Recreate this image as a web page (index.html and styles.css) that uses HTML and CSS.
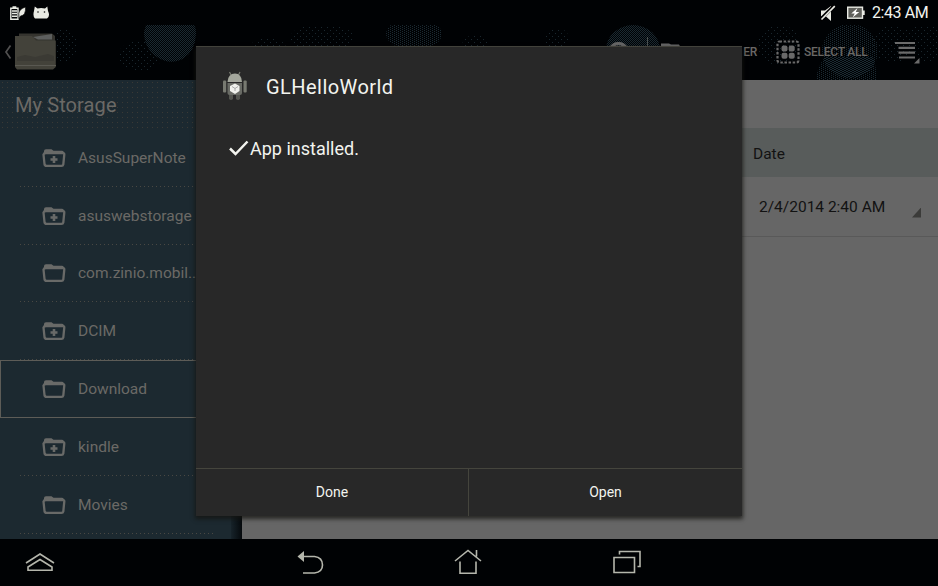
FILE: index.html
```html
<!DOCTYPE html>
<html lang="en">
<head>
<meta charset="utf-8">
<title>File Manager</title>
<link rel="stylesheet" href="styles.css">
</head>
<body>
<svg width="0" height="0" class="defs">
  <defs>
    <symbol id="folder" viewBox="0 0 24 20">
      <path d="M2.500 16L1.500 6.500Q2 5 4 5H20.500Q22.500 5 22.300 6.500L21.300 16.500Q21 17.800 19.500 17.800H4.500Q2.700 17.800 2.500 16Z" fill="none" stroke="currentColor" stroke-width="2.300"/>
      <path d="M2 6V3Q2 1.200 4 1.200H9.500L11.500 2.700H20Q22 2.700 22 6Z" fill="currentColor"/>
    </symbol>
    <symbol id="folder-plus" viewBox="0 0 24 20">
      <use href="#folder"/>
      <path d="M12 8V15M8.500 11.500H15.500" stroke="currentColor" stroke-width="2.600"/>
    </symbol>
  </defs>
</svg>
<div class="screen">
  <header class="status">
    <svg class="status-left" width="50" height="25" viewBox="0 0 50 25">
      <path d="M10.8 8.3H18V19.3H10.8ZM12.5 7H16.3" fill="none" stroke="#e9ebe4" stroke-width="1.4"/>
      <path d="M12 11H17M12 13.5H17M12 16.2H17" stroke="#e9ebe4" stroke-width="1.5"/>
      <path d="M19 16.5Q17.5 9.5 25.5 7Q26 15.5 20.5 16L19 18.5Z" fill="#e9ebe4" stroke="#000" stroke-width=".6"/>
      <path d="M35 18.500Q32.500 16 34 11L34.8 6.500L37.5 8.500Q41 7.6 45 8.500L47.300 6.500L48 11Q50.500 16 47 18.500Z" fill="#e9ebe4"/>
      <circle cx="38" cy="12" r=".8" fill="#111"/><circle cx="44.5" cy="12" r=".8" fill="#111"/>
    </svg>
    <div class="status-right">
      <svg width="16" height="18" viewBox="0 0 16 18">
        <path d="M1 6.500H5L11 2V17L6 12.5H1Z" fill="#e9ebe4"/>
        <path d="M0 16L14 2" stroke="#000" stroke-width="3.4"/>
        <path d="M1.5 15.5L14.8 2.2" stroke="#e9ebe4" stroke-width="1.7"/>
      </svg>
      <svg class="battery" width="18" height="14" viewBox="0 0 18 14">
        <rect x=".7" y="1.2" width="14.8" height="11" fill="#60615c" stroke="#e9ebe4" stroke-width="1.4"/>
        <path d="M16 4.5H17.7V9H16Z" fill="#e9ebe4"/>
        <path d="M10.5 2L4.3 7.4H7.7L5.7 11.5L12.3 6H8.8Z" fill="#fff"/>
      </svg>
      <span class="clock">2:43 AM</span>
    </div>
  </header>

  <div class="actionbar">
    <svg class="bokeh" width="938" height="55" viewBox="0 25 938 55">
      <defs>
        <pattern id="dense" width="2" height="2" patternUnits="userSpaceOnUse"><path d="M0 0h1v1H0zM1 1h1v1H1z" fill="#1b2a32"/></pattern>
        <pattern id="mid" width="4" height="2" patternUnits="userSpaceOnUse"><path d="M0 0h1v1H0zM2 1h1v1H2z" fill="#1b2a32"/></pattern>
        <pattern id="sparse" width="6" height="6" patternUnits="userSpaceOnUse"><path d="M0 0h1v1H0zM3 3h1v1H3z" fill="#1a272e"/></pattern>
      </defs>
      <path d="M146 25H193Q196 25 196 34Q195 51 184 58Q171 66 157 57Q144 48 144 32Z" fill="url(#dense)"/>
      <ellipse cx="140" cy="56" rx="22" ry="15" fill="url(#sparse)"/>
      <ellipse cx="64" cy="45" rx="14" ry="17" fill="url(#sparse)"/>
      <ellipse cx="268" cy="48" rx="18" ry="10" fill="url(#sparse)"/>
      <ellipse cx="322" cy="38" rx="32" ry="14" fill="url(#sparse)"/>
      <ellipse cx="414" cy="34" rx="28" ry="16" fill="url(#mid)"/>
      <ellipse cx="475" cy="46" rx="13" ry="11" fill="url(#sparse)"/>
      <ellipse cx="557" cy="39" rx="12" ry="11" fill="url(#sparse)"/>
      <ellipse cx="633" cy="50" rx="27" ry="25" fill="url(#dense)"/>
      <ellipse cx="779" cy="45" rx="21" ry="20" fill="url(#sparse)"/>
      <ellipse cx="850" cy="51" rx="28" ry="27" fill="url(#mid)"/>
      <path d="M824 57H872Q876 68 875 80H815Q816 67 824 57Z" fill="url(#mid)" transform="translate(1 0)"/>
      <ellipse cx="893" cy="44" rx="22" ry="18" fill="url(#sparse)"/>
      <ellipse cx="927" cy="37" rx="16" ry="26" fill="url(#sparse)"/>
      <path d="M610.500 48.500A9 9 0 0 1 626.500 48.500" fill="none" stroke="#666" stroke-width="3.400"/>
      <path d="M647.5 37V60" stroke="#4a5050"/>
      <path d="M661 48V43.500H669L671 44.500H679L681 48Z" fill="#666"/>
    </svg>
    <svg class="up" width="60" height="55" viewBox="0 25 60 55">
      <path d="M10.500 45.500L6 52L10.500 58.500" fill="none" stroke="#505050" stroke-width="1.700"/>
      <path d="M19 33.500H52L55 36V66H19Z" fill="#35342f"/>
      <path d="M15 36H32L36 40.500H55.800V67L53 69.500H17L15 67Z" fill="#43423a"/>
      <path d="M33 37L52 34V39.500H38Z" fill="#5d5f5e"/>
      <path d="M17 57L25 55L35 57L48 54L54 56V61H17Z" fill="#3b3a34"/>
      <path d="M15 65.500H56" stroke="#5a5952"/>
    </svg>
    <div class="actions">
      <span class="action-label">ER</span>
      <svg class="grid-icon" width="24" height="24" viewBox="0 0 24 24">
        <rect x="1.500" y="1.500" width="21" height="21" rx="2" fill="none" stroke="#696969" stroke-width="2.200" stroke-dasharray="2.500 1.600"/>
        <g fill="#696969"><rect x="5.500" y="5.500" width="6" height="6" rx="2"/><rect x="12.700" y="5.500" width="6" height="6" rx="2"/><rect x="5.500" y="12.700" width="6" height="6" rx="2"/><rect x="12.700" y="12.700" width="6" height="6" rx="2"/></g>
      </svg>
      <span class="action-label all">SELECT ALL</span>
      <svg class="menu" width="26" height="24" viewBox="0 0 26 24">
        <path d="M0 3H20M3.500 7.800H20M3.500 12.700H20M4 17.500H20" stroke="#6b6b6b" stroke-width="2.200"/>
        <path d="M24.500 18V23.500H19Z" fill="#6b6b6b"/>
      </svg>
    </div>
  </div>

  <main class="body">
    <nav class="sidebar">
      <h2>My Storage</h2>
      <ul>
        <li><svg><use href="#folder-plus"/></svg><span>AsusSuperNote</span></li>
        <li><svg><use href="#folder-plus"/></svg><span>asuswebstorage</span></li>
        <li><svg><use href="#folder"/></svg><span>com.zinio.mobil...</span></li>
        <li><svg><use href="#folder-plus"/></svg><span>DCIM</span></li>
        <li class="selected"><svg><use href="#folder"/></svg><span>Download</span></li>
        <li><svg><use href="#folder-plus"/></svg><span>kindle</span></li>
        <li><svg><use href="#folder"/></svg><span>Movies</span></li>
      </ul>
    </nav>
    <div class="edge"></div>
    <section class="files">
      <div class="path"></div>
      <div class="head"><span>Date</span></div>
      <div class="file"><span>2/4/2014 2:40 AM</span><i></i></div>
    </section>
  </main>

  <footer class="navbar">
    <svg width="938" height="47" viewBox="0 539 938 47" fill="none" stroke="#b4b6ac" stroke-width="1.600">
      <path d="M26 563L40 554L54 563M28 570.200V567L40 559.500L52 567V570.200Z"/>
      <path d="M303 556.500H314.500Q322.500 557.500 322.500 565Q322.500 572 314.500 573H303"/>
      <path d="M297.500 556.500L304 551V562Z" fill="#b4b6ac" stroke="none"/>
      <path d="M455 561L468 550.500L481 561M476.500 550V556.500M460 561.500V573.300H476V561.500"/>
      <path d="M614 557.500H634.500V572.500H614ZM619.500 554.500V551.500H640V566.500H637.500"/>
    </svg>
  </footer>

  <div class="dialog" role="dialog">
    <div class="dialog-title">
      <svg width="26" height="32" viewBox="0 0 26 32">
        <path d="M7.500 1L9 4M18 1L16.500 4" stroke="#777970" stroke-width="1.200"/>
        <path d="M5.500 11Q6 2.500 13 2.500Q19.500 2.500 20 11Z" fill="#a4a79c"/>
        <path d="M5.500 12H20V22Q20 24 18 24H7.500Q5.500 24 5.500 22Z" fill="#696b65"/>
        <path d="M7 24H11V28Q9 30 7 28ZM14 24H18V28Q16 30 14 28Z" fill="#53554f"/>
        <rect x="1" y="9.500" width="3.200" height="12" rx="1" fill="#787a71"/><rect x="21.500" y="9.500" width="3.200" height="12" rx="1" fill="#787a71"/>
        <path d="M8 15L13 12.500L17.500 15V20L13 23L8 20Z" fill="#f1f2ed"/>
        <path d="M10 15.500L13 17.500L16 15.500M13 17.500V20" fill="none" stroke="#999" stroke-width=".8"/>
      </svg>
      <h1>GLHelloWorld</h1>
    </div>
    <div class="dialog-body">
      <svg width="20" height="17" viewBox="0 0 20 17"><path d="M1 8.500L6.500 14L18.500 1.500" fill="none" stroke="#f3f4ef" stroke-width="2.500"/></svg>
      <p>App installed.</p>
    </div>
    <div class="buttons"><button>Done</button><button>Open</button></div>
  </div>
</div>
</body>
</html>
```
FILE: styles.css
```css
* { box-sizing: border-box; }
body { margin: 0; background: #000; font-family: Roboto, sans-serif; }
h1, h2, p, ul { margin: 0; padding: 0; font-weight: 400; }
ul { list-style: none; }
svg { display: block; flex: none; }
.defs { position: absolute; }
.screen { position: relative; width: 938px; height: 586px; overflow: hidden; display: flex; flex-direction: column; background: #000204; }
.status { height: 25px; flex: none; display: flex; justify-content: space-between; }
.status-right { display: flex; align-items: center; padding-right: 10px; height: 25px; }
.battery { margin: 0 7px 0 11px; }
.clock { color: #f3f4ef; font-size: 16px; letter-spacing: -.42px; width: 56px; white-space: nowrap; }
.actionbar { position: relative; height: 55px; flex: none; display: flex; justify-content: space-between; }
.bokeh { position: absolute; left: 0; top: 0; }
.up { position: relative; }
.actions { position: relative; display: flex; align-items: center; height: 53px; padding-right: 17px; }
.action-label { font-size: 12px; font-weight: 500; letter-spacing: -.25px; color: #6a6866; white-space: nowrap; }
.grid-icon { margin: 0 4px 0 19px; }
.all { width: 63px; }
.menu { margin-left: 28px; }
.body { flex: none; height: 459px; display: flex; overflow: hidden; }
.sidebar { width: 231px; flex: none; background: #1c2930; color: #6b6966; }
.sidebar h2 { height: 49px; line-height: 51px; padding-left: 15px; font-size: 20px; letter-spacing: .1px;
  background: radial-gradient(circle, #3a3935 .6px, transparent .8px) 0 0 / 5px 5px; }
.sidebar li { position: relative; height: 57.8px; display: flex; align-items: center; padding-left: 42px; font-size: 15.5px; white-space: nowrap; }
.sidebar li::after { content: ""; position: absolute; left: 20px; right: 16px; bottom: 0; height: 1px; background: repeating-linear-gradient(90deg, #494843 0 1px, transparent 1px 4px); }
.sidebar li svg { width: 24px; height: 20px; margin-right: 12px; color: #696a68; }
.sidebar .selected { border: 1px solid #5d5c57; border-right: 0; padding-left: 41px; }
.sidebar .selected::after { display: none; }
.edge { width: 11px; flex: none; background: linear-gradient(90deg, #17232a, #05090c); }
.files { flex: 1; background: #666; color: #121212; }
.path { height: 48px; }
.head { height: 49px; background: #585c5b; padding-left: 511px; font-size: 15.5px; line-height: 52px; }
.file { height: 60px; border-bottom: 1px solid #595959; padding: 1px 17px 0 517px; display: flex; justify-content: space-between; align-items: center; font-size: 15.5px; white-space: nowrap; }
.file i { width: 9px; height: 10px; margin-top: 11px; background: #3b3b39; clip-path: polygon(100% 0, 100% 100%, 0 100%); }
.navbar { height: 47px; flex: none; background: #000204; }
.dialog { position: absolute; left: 196px; top: 47px; width: 546px; height: 469px; display: flex; flex-direction: column; background: #282828; color: #f3f4ef; box-shadow: 0 -1px 0 #42423b, 0 2px 4px 1px rgba(20, 20, 16, .75); }
.dialog-title { display: flex; align-items: center; height: 79px; padding-left: 26px; gap: 18px; }
.dialog-title h1 { font-size: 20px; letter-spacing: .45px; }
.dialog-body { flex: 1; display: flex; align-items: flex-start; padding: 14px 0 0 33px; }
.dialog-body p { font-size: 18px; line-height: 20px; margin: -1px 0 0 1px; }
.buttons { height: 48px; display: flex; border-top: 1px solid #45453d; }
.buttons button { flex: none; width: 272px; border: 0; padding: 0 0 1px; background: none; color: inherit; font: 14px Roboto, sans-serif; }
.buttons button + button { flex: 1; border-left: 1px solid #45453d; }
```
